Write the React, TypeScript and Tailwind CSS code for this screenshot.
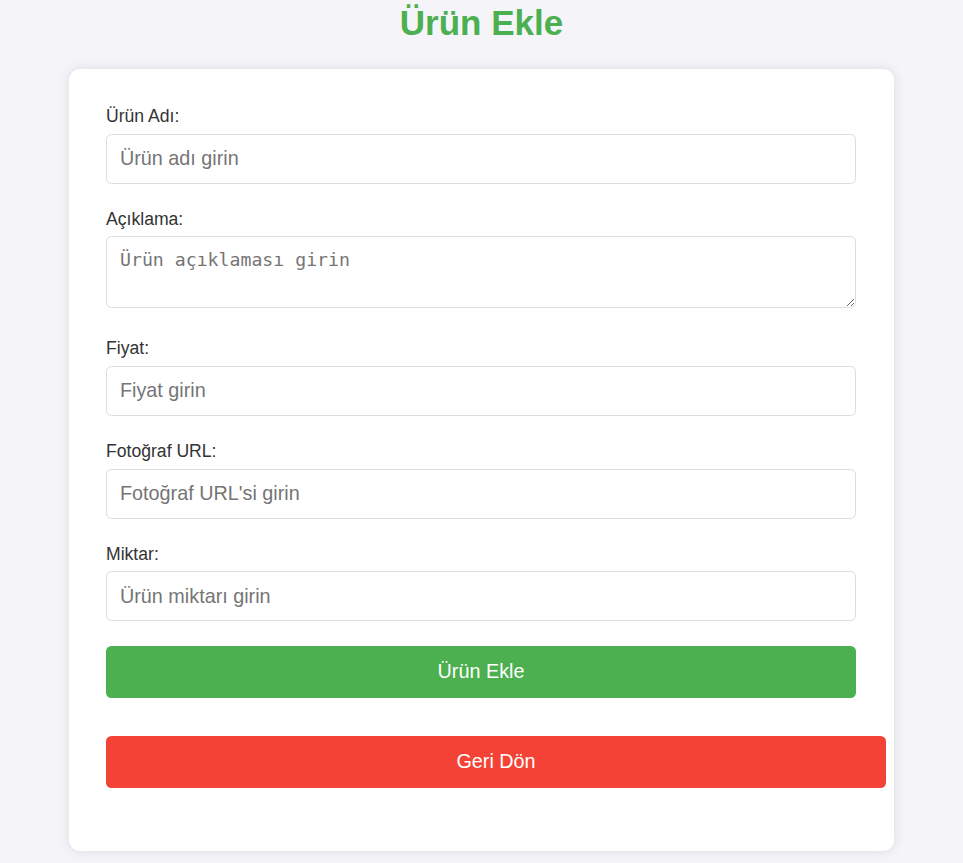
import { useState } from 'react';

const fieldClass =
  'block w-full h-[50px] px-[13px] border border-[#dddddd] rounded-[5.5px] bg-white text-[19.8px] text-[#333] placeholder:text-[#757575] outline-none focus:border-[#4caf50]';

const labelClass = 'block h-[20px] leading-[20px] mb-[7.5px] text-[17.6px] text-[#333]';

export default function App() {
  const [form, setForm] = useState({ name: '', description: '', price: '', image: '', quantity: '' });

  const update = (key: keyof typeof form) => (e: any) => setForm({ ...form, [key]: e.target.value });

  return (
    <div className="min-h-screen bg-[#f4f4f9] pt-[3px] pb-[12px] font-['Liberation_Sans',Arial,sans-serif]">
      <h1 className="text-center text-[35px] leading-[40px] font-bold text-[#4caf50] mb-[26px]">Ürün Ekle</h1>

      {/* Form card */}
      <div className="w-[825px] mx-auto bg-white rounded-[11px] shadow-[0_0_12px_rgba(0,0,0,0.1)] pl-[37px] pr-[38px] pt-[37px] pb-[37px]">
        <form onSubmit={(e) => e.preventDefault()}>
          <div className="mb-[25px]">
            <label className={labelClass}>Ürün Adı:</label>
            <input value={form.name} onChange={update('name')} placeholder="Ürün adı girin" className={fieldClass} />
          </div>

          <div className="mb-[30px]">
            <label className={labelClass}>Açıklama:</label>
            <textarea
              value={form.description}
              onChange={update('description')}
              placeholder="Ürün açıklaması girin"
              className="block w-full h-[72px] px-[13px] pt-[11px] border border-[#dddddd] rounded-[5.5px] bg-white text-[18.2px] leading-[24px] text-[#333] placeholder:text-[#757575] outline-none font-['DejaVu_Sans_Mono',monospace]"
            />
          </div>

          <div className="mb-[25.5px]">
            <label className={labelClass}>Fiyat:</label>
            <input value={form.price} onChange={update('price')} placeholder="Fiyat girin" className={fieldClass} />
          </div>

          <div className="mb-[25px]">
            <label className={labelClass}>Fotoğraf URL:</label>
            <input value={form.image} onChange={update('image')} placeholder="Fotoğraf URL'si girin" className={fieldClass} />
          </div>

          <div className="mb-[25px]">
            <label className={labelClass}>Miktar:</label>
            <input value={form.quantity} onChange={update('quantity')} placeholder="Ürün miktarı girin" className={fieldClass} />
          </div>

          <button
            type="submit"
            className="block w-full h-[52px] rounded-[5.5px] bg-[#4caf50] text-white text-[19.8px] hover:bg-[#45a049]"
          >
            Ürün Ekle
          </button>
        </form>

        <button className="block w-[780px] h-[52px] mt-[38px] mb-[26px] rounded-[5.5px] bg-[#f44336] text-white text-[19.8px] hover:bg-[#e53935]">
          Geri Dön
        </button>
      </div>
    </div>
  );
}
